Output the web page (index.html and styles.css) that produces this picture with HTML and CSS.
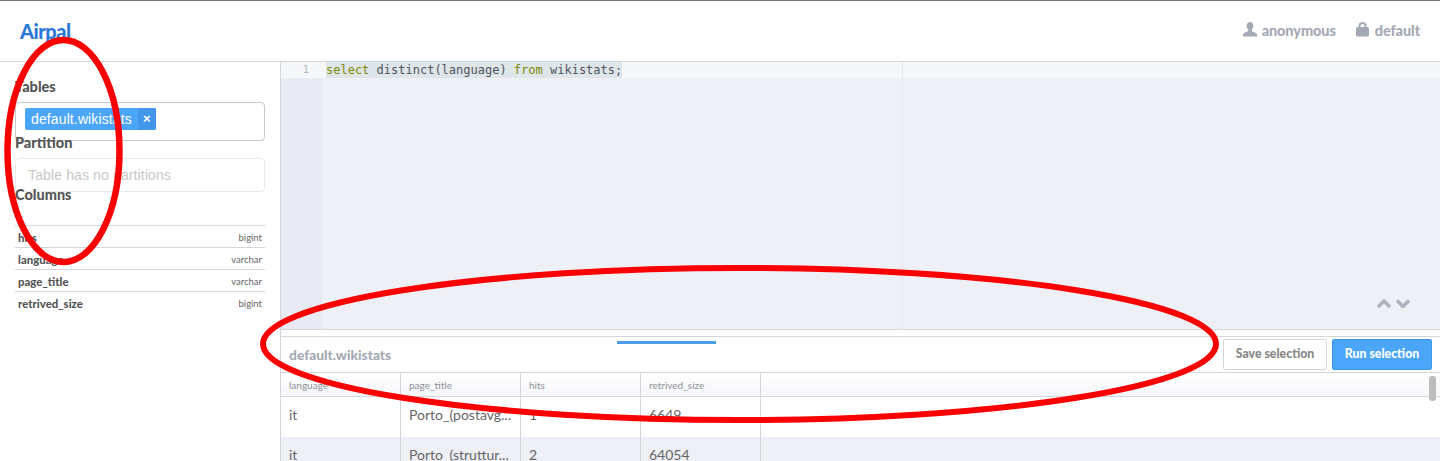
FILE: index.html
```html
<!DOCTYPE html>
<html lang="en">
<head>
<meta charset="utf-8">
<title>Airpal</title>
<link rel="stylesheet" href="styles.css">
</head>
<body>
<div class="app">
  <header class="topbar">
    <a class="brand">Airpal</a>
    <div class="user">
      <span class="user-item">
        <svg class="ico" width="14" height="15" viewBox="0 0 14 15"><path d="M7 0c2 0 3.300 1.500 3.300 3.700 0 1.600-.6 3-1.500 3.900v1.300c0 .6 4.200 1.500 5.200 3V14.500H0V11.900c1-1.500 5.200-2.400 5.200-3V7.600C4.300 6.700 3.700 5.300 3.700 3.700 3.700 1.500 5 0 7 0z"/></svg>
        anonymous
      </span>
      <span class="user-item">
        <svg class="ico ico-lock" width="13" height="15" viewBox="0 0 13 15"><path fill-rule="evenodd" d="M2.500 5V4a4 4 0 0 1 8 0v1h1a1.500 1.500 0 0 1 1.500 1.500V13a1.500 1.500 0 0 1-1.500 1.500h-10A1.500 1.500 0 0 1 0 13V6.500A1.500 1.500 0 0 1 1.500 5zM4.500 5h4V4a2 2 0 0 0-4 0z"/></svg>
        default
      </span>
    </div>
  </header>
  <div class="main">
    <aside class="sidebar">
      <h4 class="side-title title-tables">Tables</h4>
      <div class="select-box">
        <span class="tag"><span class="tag-label">default.wikistats</span><span class="tag-x">×</span></span>
      </div>
      <h4 class="side-title title-partition">Partition</h4>
      <div class="partition-box">Table has no partitions</div>
      <h4 class="side-title title-columns">Columns</h4>
      <div class="col-list">
        <div class="col-row"><b>hits</b><span>bigint</span></div>
        <div class="col-row"><b>language</b><span>varchar</span></div>
        <div class="col-row"><b>page_title</b><span>varchar</span></div>
        <div class="col-row"><b>retrived_size</b><span>bigint</span></div>
      </div>
    </aside>
    <section class="content">
      <div class="editor">
        <div class="gutter"><div class="gutter-line">1</div></div>
        <div class="code">
          <div class="code-line"><span class="sel"><span class="kw">select</span> distinct(language) <span class="kw">from</span> wikistats;</span></div>
          <div class="print-margin"></div>
          <div class="arrows">
            <svg width="33" height="9" viewBox="0 0 33 9"><path d="M1 8l6-6 6 6M20 1.500l6 6 6-6" fill="none" stroke="#aeb2bd" stroke-width="3.500"/></svg>
          </div>
        </div>
      </div>
      <div class="spacer"></div>
      <div class="results-head">
        <span class="results-title">default.wikistats</span>
        <div class="progress"></div>
        <div class="actions">
          <button class="btn btn-save">Save selection</button>
          <button class="btn btn-run">Run selection</button>
        </div>
      </div>
      <div class="grid">
        <div class="grid-row grid-header">
          <div class="cell">language</div><div class="cell">page_title</div><div class="cell">hits</div><div class="cell">retrived_size</div>
        </div>
        <div class="grid-row grid-data">
          <div class="cell">it</div><div class="cell">Porto_(postavg...</div><div class="cell">1</div><div class="cell">6649</div>
        </div>
        <div class="grid-row grid-data alt">
          <div class="cell">it</div><div class="cell">Porto_(struttur...</div><div class="cell">2</div><div class="cell">64054</div>
        </div>
        <div class="thumb"></div>
      </div>
    </section>
  </div>
  <svg class="annotations" width="1440" height="461" viewBox="0 0 1440 461">
    <ellipse cx="63.500" cy="151" rx="56" ry="111" fill="none" stroke="#fa0000" stroke-width="6.500"/>
    <ellipse cx="739.500" cy="344" rx="476.500" ry="76" fill="none" stroke="#fa0000" stroke-width="6"/>
  </svg>
</div>
</body>
</html>
```
FILE: styles.css
```css
* { box-sizing: border-box; }
html, body { margin: 0; padding: 0; }
body {
  font-family: Lato, "Liberation Sans", sans-serif;
  color: #555;
  background: #fff;
}
.app {
  position: relative;
  width: 1440px;
  height: 461px;
  overflow: hidden;
  display: flex;
  flex-direction: column;
}
.topbar {
  height: 62px;
  flex: none;
  border-top: 1px solid #777;
  border-bottom: 1px solid #d5d6da;
  display: flex;
  align-items: center;
  justify-content: space-between;
  padding: 0 20px;
}
.brand {
  font-size: 20px;
  font-weight: 900;
  color: #2a78d8;
  letter-spacing: -0.5px;
}
.user {
  display: flex;
  gap: 20px;
  margin-top: -1px;
  font-size: 14.500px;
  font-weight: 900;
  color: #a5a9b6;
  letter-spacing: -0.1px;
}
.user-item { display: flex; align-items: center; gap: 5px; }
.ico { fill: #a5a9b6; margin-top: -3px; }
.ico-lock { margin-right: 1px; }
.main { flex: 1; display: flex; min-height: 0; }
.sidebar {
  width: 281px;
  flex: none;
  border-right: 1px solid #d5d6da;
  padding: 0 15px;
}
.side-title {
  margin: 0;
  font-size: 14.500px;
  font-weight: 900;
  line-height: 18px;
  color: #555;
}
.title-tables { padding-top: 16px; margin-bottom: 6px; }
.title-partition { margin-top: -7px; margin-bottom: 6px; position: relative; }
.title-columns { margin-top: -6px; margin-bottom: 21px; position: relative; }
.select-box {
  height: 39px;
  width: 250px;
  border: 1px solid #c8c8c8;
  border-radius: 4px;
  padding: 5px 9px;
  background: #fff;
}
.tag {
  display: inline-flex;
  height: 22px;
  background: #4ba6fa;
  border-radius: 2px;
  color: #fff;
  font-family: "Liberation Sans", sans-serif;
  font-size: 14px;
  line-height: 22px;
}
.tag-label { padding: 0 6px; letter-spacing: 0.12px; }
.tag-x {
  width: 18px;
  text-align: center;
  background: #4297eb;
  border-radius: 0 2px 2px 0;
  font-weight: 700;
  font-size: 13px;
}
.partition-box {
  height: 34px;
  width: 250px;
  border: 1px solid #e9e9e9;
  border-radius: 4px;
  padding: 0 12px;
  line-height: 32px;
  font-family: "Liberation Sans", sans-serif;
  font-size: 14px;
  letter-spacing: 0.13px;
  color: #c8c8c8;
}
.col-list { width: 250px; }
.col-row {
  height: 22px;
  border-top: 1px solid #d5d6da;
  padding: 1px 3px 0;
  display: flex;
  align-items: center;
  justify-content: space-between;
  font-size: 9.500px;
  color: #666;
}
.col-row b { font-size: 11.400px; font-weight: 900; color: #555; }
.content {
  flex: 1;
  min-width: 0;
  display: flex;
  flex-direction: column;
}
.editor {
  height: 268px;
  flex: none;
  display: flex;
  background: #eef0f5;
  border-bottom: 1px solid #d5d6da;
}
.gutter { width: 42px; flex: none; background: #e8ebf3; }
.gutter-line {
  height: 16px;
  background: #f6f7fa;
  text-align: right;
  padding-right: 14px;
  font-family: "DejaVu Sans Mono", monospace;
  font-size: 11px;
  line-height: 16px;
  color: #b5b8c2;
}
.code { position: relative; flex: 1; min-width: 0; }
.code-line {
  height: 16px;
  background: #f6f7fa;
  padding-left: 3px;
  font-family: "DejaVu Sans Mono", monospace;
  font-size: 12px;
  line-height: 16px;
  color: #4d5560;
  white-space: pre;
}
.sel { display: inline-block; height: 16px; background: #dfe6ea; }
.kw { color: #7a8a00; }
.print-margin {
  position: absolute;
  left: 579px;
  top: 0;
  bottom: 0;
  width: 1px;
  background: #e6e8ee;
}
.arrows { position: absolute; right: 30px; bottom: 21px; line-height: 0; }
.spacer { height: 6px; flex: none; }
.results-head {
  position: relative;
  height: 37px;
  flex: none;
  border-top: 1px solid #d5d6da;
  border-bottom: 1px solid #d5d6da;
  display: flex;
  align-items: center;
  justify-content: space-between;
  padding: 0 8px;
}
.results-title {
  font-size: 13.800px;
  font-weight: 900;
  color: #a5a9b6;
  margin-top: -1px;
}
.progress {
  position: absolute;
  left: 336px;
  top: 4px;
  width: 99px;
  height: 3px;
  background: #4a9eea;
}
.actions { display: flex; gap: 5px; }
.btn {
  height: 31px;
  border-radius: 2px;
  font-family: Lato, sans-serif;
  font-size: 12.300px;
  font-weight: 900;
  padding: 0 0 2px;
}
.btn-save { width: 104px; background: #fff; border: 1px solid #d5d6da; color: #888; }
.btn-run { width: 100px; background: #4ba6fa; border: 1px solid #3f97ea; color: #fff; }
.grid { position: relative; flex: 1; min-height: 0; overflow: hidden; }
.grid-row { display: flex; }
.grid-header {
  height: 24px;
  background: linear-gradient(#fff, #f5f6f9);
  border-bottom: 1px solid #d5d6da;
  font-size: 10px;
  color: #8d8f96;
  line-height: 24px;
}
.grid-data {
  height: 40px;
  font-size: 14px;
  line-height: 35px;
  color: #666;
}
.alt { background: #eef0f5; }
.cell {
  width: 120px;
  flex: none;
  padding: 0 8px;
  border-right: 1px solid #d5d6da;
  white-space: nowrap;
  overflow: hidden;
}
.thumb {
  position: absolute;
  right: 4px;
  top: 3px;
  width: 7px;
  height: 25px;
  border-radius: 3px;
  background: #bdbdbd;
}
.annotations { position: absolute; left: 0; top: 0; pointer-events: none; }
```
